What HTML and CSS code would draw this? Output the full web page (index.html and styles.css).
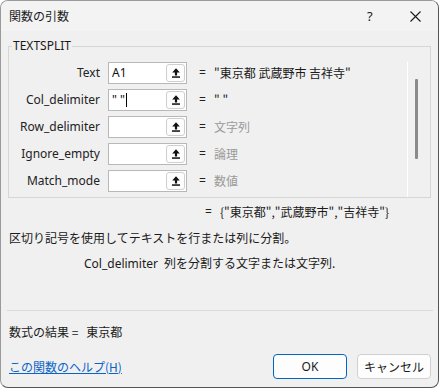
FILE: index.html
```html
<!DOCTYPE html>
<html lang="ja">
<head>
    <meta charset="UTF-8">
    <title>関数の引数</title>
    <link rel="stylesheet" href="styles.css">
</head>
<body>
<div class="window">
    <div class="titlebar">
        <span class="title">関数の引数</span>
        <span class="help">?</span>
        <span class="close">
            <svg width="11" height="11" viewBox="0 0 11 11"><path d="M0.5 0.5 L10.5 10.5 M10.5 0.5 L0.5 10.5" stroke="#1a1a1a" stroke-width="1.1" fill="none"/></svg>
        </span>
    </div>
    <div class="content">
        <fieldset class="group">
            <legend>TEXTSPLIT</legend>
            <div class="args">
                <div class="rows">
                    <div class="row">
                        <span class="label">Text</span>
                        <span class="input"><span class="field">A1</span><span class="pick"><svg width="8" height="10" viewBox="0 0 8 10"><path d="M4 0.3 L7.8 4.6 L5.1 4.6 L5.1 7.4 L2.9 7.4 L2.9 4.6 L0.2 4.6 Z" fill="#111"/><rect x="0" y="8.3" width="8" height="1.5" fill="#111"/></svg></span></span>
                        <span class="eq">=</span>
                        <span class="value">"東京都 武蔵野市 吉祥寺"</span>
                    </div>
                    <div class="row">
                        <span class="label">Col_delimiter</span>
                        <span class="input"><span class="field">" "<span class="caret"></span></span><span class="pick"><svg width="8" height="10" viewBox="0 0 8 10"><path d="M4 0.3 L7.8 4.6 L5.1 4.6 L5.1 7.4 L2.9 7.4 L2.9 4.6 L0.2 4.6 Z" fill="#111"/><rect x="0" y="8.3" width="8" height="1.5" fill="#111"/></svg></span></span>
                        <span class="eq">=</span>
                        <span class="value">" "</span>
                    </div>
                    <div class="row">
                        <span class="label">Row_delimiter</span>
                        <span class="input"><span class="field"></span><span class="pick"><svg width="8" height="10" viewBox="0 0 8 10"><path d="M4 0.3 L7.8 4.6 L5.1 4.6 L5.1 7.4 L2.9 7.4 L2.9 4.6 L0.2 4.6 Z" fill="#111"/><rect x="0" y="8.3" width="8" height="1.5" fill="#111"/></svg></span></span>
                        <span class="eq">=</span>
                        <span class="value muted">文字列</span>
                    </div>
                    <div class="row">
                        <span class="label">Ignore_empty</span>
                        <span class="input"><span class="field"></span><span class="pick"><svg width="8" height="10" viewBox="0 0 8 10"><path d="M4 0.3 L7.8 4.6 L5.1 4.6 L5.1 7.4 L2.9 7.4 L2.9 4.6 L0.2 4.6 Z" fill="#111"/><rect x="0" y="8.3" width="8" height="1.5" fill="#111"/></svg></span></span>
                        <span class="eq">=</span>
                        <span class="value muted">論理</span>
                    </div>
                    <div class="row">
                        <span class="label">Match_mode</span>
                        <span class="input"><span class="field"></span><span class="pick"><svg width="8" height="10" viewBox="0 0 8 10"><path d="M4 0.3 L7.8 4.6 L5.1 4.6 L5.1 7.4 L2.9 7.4 L2.9 4.6 L0.2 4.6 Z" fill="#111"/><rect x="0" y="8.3" width="8" height="1.5" fill="#111"/></svg></span></span>
                        <span class="eq">=</span>
                        <span class="value muted">数値</span>
                    </div>
                </div>
                <div class="scroll"><div class="thumb"></div></div>
            </div>
        </fieldset>

        <div class="result">
            <span class="eq">=</span>
            <span class="value">{"東京都","武蔵野市","吉祥寺"}</span>
        </div>
        <p class="desc">区切り記号を使用してテキストを行または列に分割。</p>
        <p class="argdesc"><span class="argname">Col_delimiter</span>列を分割する文字または文字列.</p>

        <div class="sep"></div>

        <p class="formula">数式の結果 =<span class="formula-value">東京都</span></p>

        <div class="footer">
            <a class="helplink" href="#">この関数のヘルプ(H)</a>
            <div class="buttons">
                <button class="btn primary">OK</button>
                <button class="btn">キャンセル</button>
            </div>
        </div>
    </div>
</div>
</body>
</html>
```

FILE: styles.css
```css
body {
    margin: 0;
    background: #ffffff;
    font-family: "Segoe UI", "Noto Sans", "Noto Sans CJK JP", sans-serif;
    font-size: 12px;
    line-height: 16px;
    color: #1a1a1a;
}
.window {
    box-sizing: border-box;
    width: 439px;
    height: 388px;
    border: 1px solid #9a9a9a;
    border-right-color: #555;
    border-bottom-color: #555;
    border-radius: 8px;
    background: #f0f0f0;
    overflow: hidden;
}
.titlebar {
    display: flex;
    align-items: center;
    height: 30px;
    padding-left: 8px;
    background: #f3f3f3;
}
.title {
    flex: 1;
    font-family: "Noto Sans CJK JP", sans-serif;
}
.help {
    width: 14px;
    margin-right: 29px;
    font-size: 13px;
}
.close {
    display: flex;
    margin-right: 17px;
}
.content {
    padding: 0 7px;
}
.group {
    margin: 8px 0 0;
    padding: 9px 0 0;
    border: 1px solid #d6d6d6;
    width: 423px;
    box-sizing: border-box;
}
.group legend {
    padding: 0 1px;
    margin-left: 3px;
    line-height: 14px;
}
.args {
    display: flex;
}
.rows {
    flex: 1;
    display: flex;
    flex-direction: column;
    gap: 5px;
    padding-bottom: 5px;
}
.row {
    display: flex;
    align-items: center;
    height: 22px;
}
.label {
    width: 91px;
    text-align: right;
    color: #222;
}
.input {
    display: flex;
    box-sizing: border-box;
    width: 79px;
    height: 22px;
    margin-left: 8px;
    border: 1px solid #b8b8b8;
    background: #fff;
}
.field {
    flex: 1;
    display: flex;
    align-items: center;
    padding-left: 3px;
    color: #111;
}
.caret {
    display: inline-block;
    width: 1px;
    height: 14px;
    margin-left: 1px;
    background: #000;
}
.pick {
    display: flex;
    align-items: center;
    justify-content: center;
    width: 19px;
    margin: 1px;
    border: 1px solid #cfcfcf;
    border-radius: 3px;
    background: #fdfdfd;
    box-sizing: border-box;
}
.eq {
    width: 12px;
    margin-left: 12px;
    color: #222;
}
.value {
    margin-left: 3px;
    font-family: "Noto Sans CJK JP", sans-serif;
    color: #1a1a1a;
}
.value.muted {
    color: #9a9a9a;
}
.scroll {
    width: 22px;
    border-left: 1px solid #fff;
}
.thumb {
    width: 3px;
    height: 80px;
    margin: 17px 0 0 7px;
    background: #8a8a8a;
    border-radius: 1px;
}
.result {
    display: flex;
    margin-top: 6px;
    padding-left: 185px;
}
.desc {
    margin: 10px 0 0 1px;
    font-family: "Noto Sans CJK JP", sans-serif;
}
.argdesc {
    margin: 9px 0 0 76px;
    font-family: "Noto Sans CJK JP", sans-serif;
}
.argname {
    font-family: "Segoe UI", "Noto Sans", sans-serif;
    margin-right: 6px;
}
.sep {
    height: 1px;
    margin: 38px 0 0 -1px;
    width: 426px;
    background: #dadada;
}
.formula {
    margin: 13px 0 0 1px;
    font-family: "Noto Sans CJK JP", sans-serif;
}
.formula-value {
    margin-left: 8px;
}
.footer {
    display: flex;
    align-items: center;
    justify-content: space-between;
    margin-top: 14px;
}
.helplink {
    margin-left: 1px;
    color: #0a64c8;
    font-family: "Noto Sans CJK JP", sans-serif;
    text-decoration: underline;
}
.buttons {
    display: flex;
    gap: 10px;
    margin-right: 0;
}
.btn {
    width: 74px;
    height: 25px;
    padding: 0;
    border: 1px solid #d0d0d0;
    border-radius: 4px;
    background: #fdfdfd;
    font-family: "Segoe UI", "Noto Sans", "Noto Sans CJK JP", sans-serif;
    font-size: 12px;
    color: #1a1a1a;
}
.btn.primary {
    border-color: #0067c0;
}
```
